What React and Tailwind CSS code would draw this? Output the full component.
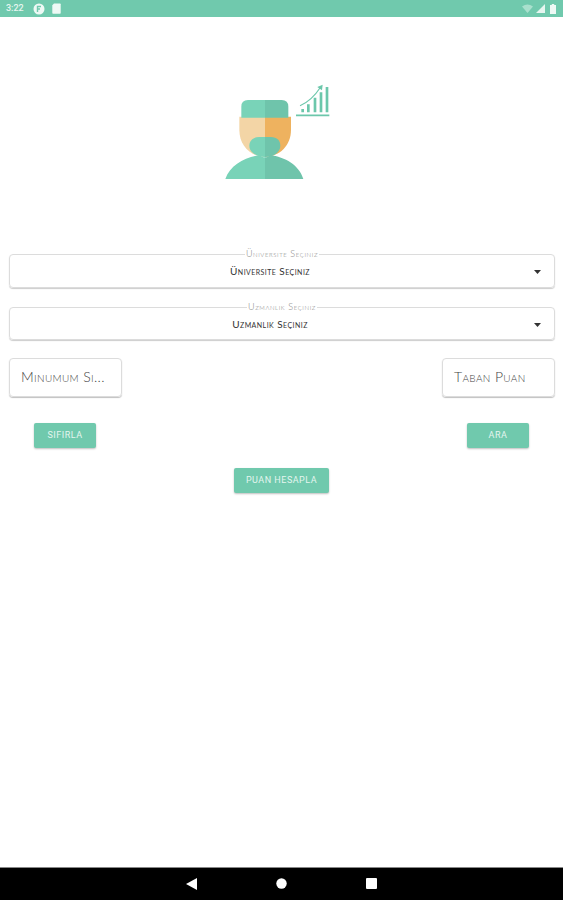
import React from 'react'

const font = "font-['Lato',sans-serif] [font-variant:small-caps]"

function Logo() {
  return (
    <svg width="131" height="115" viewBox="18 0 393 345" className="block">
      {/* cap, face, beard and body are split in a light and a dark half */}
      <path d="M88 125 H165 V245 C120 245 88 210 88 165 Z" fill="#f3d5a6" />
      <path d="M165 125 H243 V165 C243 210 210 245 165 245 Z" fill="#eeb25f" />
      <path d="M94 128 V95 Q94 75 114 75 H165 V128 Z" fill="#79d3b8" />
      <path d="M165 75 H215 Q235 75 235 95 V128 H165 Z" fill="#6fc4ab" />
      <path d="M165 186 H148 C128 186 118 198 118 212 C118 232 140 246 165 246 Z" fill="#79d3b8" />
      <path d="M165 186 H182 C202 186 211 198 211 212 C211 232 190 246 165 246 Z" fill="#6fc4ab" />
      <path d="M46 312 C60 270 105 246 150 240 C155 246 160 247 165 247 V312 Z" fill="#79d3b8" />
      <path d="M280 312 C268 270 225 246 180 240 C175 246 170 247 165 247 V312 Z" fill="#6fc4ab" />
      <path d="M258 121 H358" stroke="#6cc7ab" strokeWidth="5" />
      <path d="M278 112 V102 M295 112 V88 M315 112 V68 M333 112 V52 M351 112 V36" stroke="#6cc7ab" strokeWidth="8" />
      <path d="M270 92 C295 82 315 62 332 36" stroke="#6cc7ab" strokeWidth="3.5" fill="none" />
      <path d="M322 36 L338 29 L336 46 Z" fill="#6cc7ab" />
    </svg>
  )
}

function StatusBar() {
  return (
    <div className="h-[17px] bg-[#70c9ad] flex items-center pl-[6px] pr-[7px] shrink-0">
      <span className="text-[9px] leading-none font-['Roboto',sans-serif] font-medium text-[#e6f6f0] w-[27px]">3:22</span>
      <svg width="12" height="12" viewBox="0 0 12 12" className="mr-[7px]">
        <circle cx="6" cy="6" r="5.5" fill="#eef9f5" />
        <path d="M4.5 9 V3.5 H8 M4.5 6 H7" stroke="#70c9ad" strokeWidth="1.4" fill="none" />
      </svg>
      <svg width="9" height="11" viewBox="0 0 9 11">
        <path d="M2 0.5 H8 Q8.7 0.5 8.7 1.2 V10 Q8.7 10.7 8 10.7 H1 Q0.3 10.7 0.3 10 V2.2 Z" fill="#eef9f5" />
      </svg>
      <div className="ml-auto flex items-center gap-[3px]">
        <svg width="11" height="9" viewBox="0 0 11 9">
          <path d="M0 2.5 Q5.5 -1.5 11 2.5 L5.5 9 Z" fill="#a9e0cd" />
        </svg>
        <svg width="9" height="9" viewBox="0 0 9 9">
          <path d="M9 0 V9 H0 Z" fill="#e6f6f0" />
        </svg>
        <svg width="6" height="10" viewBox="0 0 6 10" className="ml-[2px]">
          <path d="M1.8 0 H4.2 V1 H6 V10 H0 V1 H1.8 Z" fill="#eef9f5" />
        </svg>
      </div>
    </div>
  )
}

function SelectBox({ label, value, height }) {
  return (
    <fieldset className={`${height} ml-[9px] mr-[8px] rounded-[4px] border border-[#dcdcdc] shadow-[0_1px_1px_rgba(0,0,0,0.2)] relative`}>
      <legend className={`mx-auto px-[1px] text-[9px] leading-[8px] tracking-[0.6px] text-[#808080] ${font} font-light`}>{label}</legend>
      {/* the value is centered in the space left of the arrow */}
      <div className={`pr-[24px] text-center text-[10px] leading-[14px] tracking-[0.45px] text-[#333] mt-[6px] ${font}`}>{value}</div>
      <svg width="7" height="4" viewBox="0 0 7 4" className="absolute right-[13px] top-[12px]">
        <path d="M0 0 H7 L3.5 4 Z" fill="#333" />
      </svg>
    </fieldset>
  )
}

function InputBox({ text }) {
  return (
    <div className={`h-[39px] w-[113px] rounded-[4px] border border-[#dcdcdc] shadow-[0_1px_1px_rgba(0,0,0,0.25)] flex items-center pl-[11px] pb-[2px] text-[14px] font-light tracking-[0.35px] whitespace-nowrap text-[#444] ${font}`}>
      {text}
    </div>
  )
}

function ActionButton({ children, width }) {
  return (
    <button className={`h-[25px] ${width} rounded-[2px] bg-[#70c9ad] shadow-[0_1px_2px_rgba(0,0,0,0.25)] text-[9px] font-['Roboto',sans-serif] tracking-[0.5px] text-[#e4f5ef]`}>
      {children}
    </button>
  )
}

export default function App() {
  return (
    <div className="h-[900px] bg-white flex flex-col overflow-hidden">
      <StatusBar />
      <main className="flex-1 flex flex-col">
        <div className="flex justify-center mt-[58px]">
          <Logo />
        </div>
        <div className="mt-[60px]">
          <SelectBox label="Üniversite Seçiniz" value="Üniversite Seçiniz" height="h-[38px]" />
        </div>
        <div className="mt-[15px]">
          <SelectBox label="Uzmanlık Seçiniz" value="Uzmanlık Seçiniz" height="h-[37px]" />
        </div>
        <div className="flex justify-between pl-[9px] pr-[8px] mt-[18px]">
          <InputBox text="Minumum Si..." />
          <InputBox text="Taban Puan" />
        </div>
        <div className="flex justify-between px-[34px] mt-[26px]">
          <ActionButton width="w-[62px]">SIFIRLA</ActionButton>
          <ActionButton width="w-[62px]">ARA</ActionButton>
        </div>
        <div className="flex justify-center mt-[20px]">
          <ActionButton width="w-[95px]">PUAN HESAPLA</ActionButton>
        </div>
      </main>
      <nav className="h-[33px] bg-black shrink-0 flex items-center justify-center gap-[79px] border-t border-[#888] pb-[1px]">
        <svg width="11" height="12" viewBox="0 0 11 12"><path d="M11 0 V12 L0 6 Z" fill="#fff" /></svg>
        <svg width="11" height="11" viewBox="0 0 11 11"><circle cx="5.5" cy="5.5" r="5.2" fill="#fff" /></svg>
        <svg width="11" height="11" viewBox="0 0 11 11"><rect x="0" y="0" width="11" height="11" rx="1" fill="#fff" /></svg>
      </nav>
    </div>
  )
}
